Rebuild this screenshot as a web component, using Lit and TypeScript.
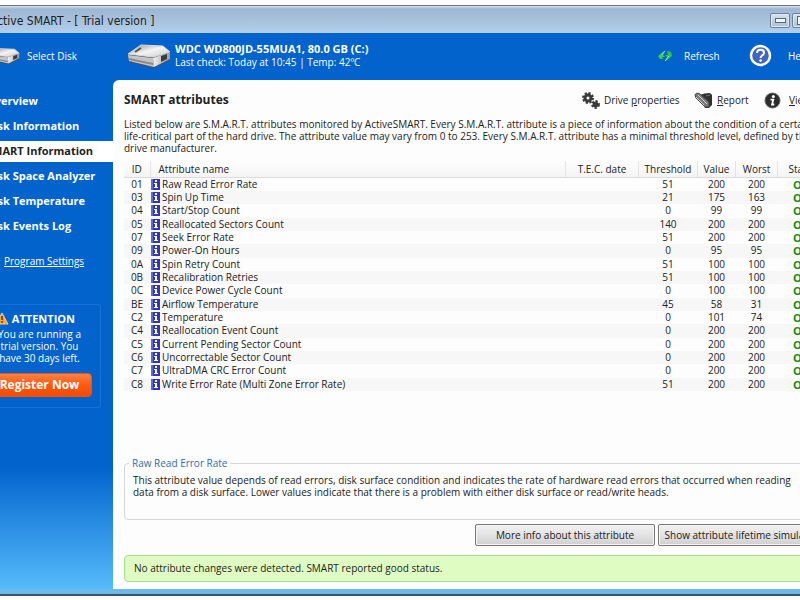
import { LitElement, html, css, svg } from "lit";
import { customElement } from "lit/decorators.js";
import { classMap } from "lit/directives/class-map.js";

type Row = [string, string, number, number, number];

const ROWS: Row[] = [
  ["01", "Raw Read Error Rate", 51, 200, 200],
  ["03", "Spin Up Time", 21, 175, 163],
  ["04", "Start/Stop Count", 0, 99, 99],
  ["05", "Reallocated Sectors Count", 140, 200, 200],
  ["07", "Seek Error Rate", 51, 200, 200],
  ["09", "Power-On Hours", 0, 95, 95],
  ["0A", "Spin Retry Count", 51, 100, 100],
  ["0B", "Recalibration Retries", 51, 100, 100],
  ["0C", "Device Power Cycle Count", 0, 100, 100],
  ["BE", "Airflow Temperature", 45, 58, 31],
  ["C2", "Temperature", 0, 101, 74],
  ["C4", "Reallocation Event Count", 0, 200, 200],
  ["C5", "Current Pending Sector Count", 0, 200, 200],
  ["C6", "Uncorrectable Sector Count", 0, 200, 200],
  ["C7", "UltraDMA CRC Error Count", 0, 200, 200],
  ["C8", "Write Error Rate (Multi Zone Error Rate)", 51, 200, 200],
];

const NAV = [
  "Overview",
  "Disk Information",
  "SMART Information",
  "Disk Space Analyzer",
  "Disk Temperature",
  "Disk Events Log",
];

const drive = (w: number, h: number) => html`
  <svg width=${w} height=${h} viewBox="0 0 44 26" aria-hidden="true">
    <defs>
      <linearGradient id="top" x1="0" y1="0" x2="1" y2="1">
        <stop offset="0" stop-color="#8d8d8d" />
        <stop offset="0.5" stop-color="#f4f4f4" />
        <stop offset="1" stop-color="#c9c9c9" />
      </linearGradient>
      <linearGradient id="side" x1="0" y1="0" x2="1" y2="0">
        <stop offset="0" stop-color="#f2f2f2" />
        <stop offset="1" stop-color="#9a9a9a" />
      </linearGradient>
    </defs>
    <path d="M1 12 L14 2 L36 4 L43 9 L43 17 L27 25 L2 19 Z" fill="#4c5058" />
    <path d="M1 11 L14 2 L36 3 L43 9 L26 14 Z" fill="url(#top)" stroke="#d9d9d9" />
    <path d="M1 12 L26 15 L27 24 L2 18 Z" fill="#c4c4c4" />
    <path d="M2 15 L26 20 L26 22 L2 17 Z" fill="#8b8b8b" />
    <path d="M26 15 L43 9 L43 16 L27 24 Z" fill="url(#side)" />
    <path d="M34 13 L40 11 L40 16 L34 19 Z" fill="#3c3c3c" />
    <path d="M8 9 L14 5" stroke="#555" stroke-width="2" />
  </svg>`;

const gear = (cx: number, cy: number, r: number) => svg`
  <circle cx=${cx} cy=${cy} r=${r} fill="none" stroke="#3a3a3a" stroke-width="2" stroke-dasharray="2.2 1.7" />
  <circle cx=${cx} cy=${cy} r=${r - 2} fill="none" stroke="#3a3a3a" stroke-width="3" />
`;

const gears = html`
  <svg width="18" height="17" viewBox="0 0 18 17" aria-hidden="true">
    ${gear(6, 6, 5)} ${gear(13.5, 12.5, 3.4)}
  </svg>`;

const report = html`
  <svg width="19" height="17" viewBox="0 0 19 17" aria-hidden="true">
    <path d="M6 3 Q10 1 16 1 L18 3 V13 L15 16 H11 Z" fill="#303030" />
    <path d="M1 3 Q2 0 6 2 L15 10 V15 L11 15 L2 6 Z" fill="#777" stroke="#454545" />
    <path d="M2 5 L10 13 M4 3 L13 12" stroke="#d6d6d6" />
    <path d="M12 4 L16 3" stroke="#777" />
  </svg>`;

const info = html`
  <svg width="17" height="17" viewBox="0 0 17 17" aria-hidden="true">
    <circle cx="8.5" cy="8.5" r="7.5" fill="#2c2c2c" stroke="#666" />
    <circle cx="9.3" cy="4.6" r="1.5" fill="#fff" />
    <path d="M6.5 7.7 H9.3 L8 12.5 H10.3" stroke="#fff" stroke-width="1.8" fill="none" />
  </svg>`;

const refresh = html`
  <svg width="16" height="12" viewBox="0 0 16 12" aria-hidden="true">
    <path d="M7 1 L1 6 L3 9 H6 L5 7 H8 L6 5 Z" fill="#35d24a" />
    <path d="M9 11 L15 6 L14 2 L10 1 L11 5 H8 L10 7 Z" fill="#2fc445" />
    <path d="M8 1 L5 5 M8 11 L12 6" stroke="#8df08f" />
  </svg>`;

const help = html`
  <svg width="23" height="23" viewBox="0 0 23 23" aria-hidden="true">
    <circle cx="11.5" cy="11.5" r="9.5" fill="#3f66c4" stroke="#fff" stroke-width="2.4" />
    <path d="M8 9 Q8 5.7 11.5 5.7 Q15 5.7 15 8.7 Q15 10.5 13 11.5 Q11.6 12.3 11.6 14" fill="none" stroke="#fff" stroke-width="2" />
    <circle cx="11.6" cy="16.6" r="1.3" fill="#fff" />
  </svg>`;

const warning = html`
  <svg width="14" height="13" viewBox="0 0 14 13" aria-hidden="true">
    <path d="M7 1 L13 12 H1 Z" fill="#f5a63c" stroke="#f7c988" stroke-linejoin="round" />
    <path d="M7 4 V8" stroke="#5b3a10" stroke-width="1.6" />
    <circle cx="7" cy="10" r="0.9" fill="#5b3a10" />
  </svg>`;

const badge = html`
  <svg class="badge" width="9" height="11" viewBox="0 0 9 11" aria-hidden="true">
    <rect width="9" height="11" fill="#2f35c0" />
    <rect width="2" height="11" fill="#5c6ae0" />
    <path d="M4 1 H6 V3 H4 Z M3 4 H6 V8 H7 V9 H3 V8 H4 V5 H3 Z" fill="#fff" />
  </svg>`;

@customElement("app-root")
export class AppRoot extends LitElement {
  static styles = css`
    :host {
      display: block;
      height: 100vh;
      overflow: hidden;
      background: #fdfdfd;
      box-sizing: border-box;
      padding: 5px 0 4px;
      font: 10px/12px "Open Sans", "DejaVu Sans Condensed", sans-serif;
      color: #222;
    }
    * {
      box-sizing: border-box;
    }
    h1, h2, p, ul {
      margin: 0;
      padding: 0;
      font-size: inherit;
    }
    button {
      font: inherit;
      color: inherit;
      background: none;
      border: 0;
      padding: 0;
      white-space: nowrap;
    }
    svg {
      display: block;
      flex: none;
    }
    .window {
      height: 100%;
      width: calc(100% + 65px);
      margin-left: -24px;
      display: flex;
      flex-direction: column;
      border-top: 1px solid #6f7780;
      border-bottom: 2px solid #35566b;
    }
    .title {
      height: 27px;
      flex: none;
      display: flex;
      align-items: center;
      padding: 2px 7px 0 14px;
      background: linear-gradient(#d3dfec, #9db6d1 3px, #b4cfea);
      font-size: 12px;
      font-family: "DejaVu Sans Condensed", sans-serif;
    }
    .title h1 {
      flex: 1;
      font-weight: normal;
    }
    .controls {
      display: flex;
      gap: 2px;
    }
    .controls button {
      width: 20px;
      height: 15px;
      display: flex;
      align-items: center;
      justify-content: center;
      border: 1px solid #6c8199;
      border-radius: 2px;
      background: linear-gradient(#d5e2ef, #a9c0d8);
      box-shadow: inset 0 0 0 1px #dde8f3;
    }
    .body {
      flex: 1;
      min-height: 0;
      display: flex;
      flex-direction: column;
      background: linear-gradient(#0263cd 78%, #55bbfa);
      border-bottom: 5px solid #6db9ea;
    }
    .head {
      height: 47px;
      flex: none;
      display: flex;
      align-items: center;
      padding-bottom: 2px;
      color: #fff;
    }
    .head button {
      display: flex;
      align-items: center;
    }
    .select {
      width: 151px;
      padding-left: 14px;
      gap: 7px;
    }
    .disk {
      flex: 1;
      display: flex;
      align-items: center;
      gap: 4px;
      line-height: 13px;
    }
    .refresh {
      width: 92px;
      gap: 11px;
    }
    .help {
      width: 92px;
      gap: 16px;
    }
    .main {
      flex: 1;
      min-height: 0;
      display: flex;
    }
    .side {
      width: 137px;
      flex: none;
      color: #fff;
      padding-top: 11px;
    }
    b, .side li, .side h2 {
      font-size: 11px;
      font-weight: bold;
    }
    .side li {
      list-style: none;
      height: 21px;
      margin-bottom: 4px;
      padding-left: 10px;
      line-height: 20px;
    }
    .side li a {
      color: inherit;
      text-decoration: none;
    }
    .side li.current {
      background: #fff;
      color: #222;
    }
    .settings {
      display: inline-block;
      margin: 14px 0 0 28px;
      color: #fff;
    }
    .trial {
      margin: 37px 12px 0 10px;
      height: 104px;
      padding: 7px 8px 0 0;
      border: 1px solid #1c72d4;
      border-radius: 3px;
      text-align: center;
    }
    .trial h2 {
      display: flex;
      justify-content: flex-end;
      align-items: center;
      gap: 3px;
      margin: 0 17px 3px 0;
    }
    .register {
      width: 105px;
      height: 24px;
      margin-top: 9px;
      border-radius: 4px;
      background: linear-gradient(#ff8040, #fb5a12 50%, #f74a00);
      border: 1px solid #e2561c;
      color: #fff;
      font-size: 12px;
      font-weight: bold;
    }
    .panel {
      flex: 1;
      min-width: 0;
      display: flex;
      flex-direction: column;
      background: #fdfdfd;
      border-top-left-radius: 6px;
      padding: 10px 12px 7px 11px;
    }
    .bar {
      display: flex;
      align-items: center;
      height: 20px;
      flex: none;
      margin-bottom: 8px;
    }
    .bar h2 {
      flex: 1;
      font-size: 12px;
    }
    .bar button {
      display: flex;
      align-items: center;
      gap: 4px;
    }
    .props {
      width: 112px;
    }
    .rep {
      width: 70px;
    }
    .view {
      width: 65px;
    }
    .bar .view {
      gap: 8px;
    }
    .intro {
      white-space: nowrap;
      margin-bottom: 7px;
    }
    table {
      width: 100%;
      table-layout: fixed;
      border-collapse: collapse;
      text-align: center;
      margin-bottom: auto;
    }
    .c-id {
      width: 26px;
    }
    .c-tec {
      width: 73px;
    }
    .c-thr {
      width: 59px;
    }
    .c-val {
      width: 38px;
    }
    .c-wor {
      width: 42px;
    }
    .c-st {
      width: 51px;
    }
    th {
      height: 16px;
      padding: 0;
      font-weight: normal;
      border-bottom: 1px solid #dcdcdc;
      border-right: 1px solid #e4e4e4;
      background: linear-gradient(#fdfdfd, #f4f4f4);
    }
    td {
      height: 13px;
      padding: 0;
      line-height: 13px;
      white-space: nowrap;
    }
    tr:nth-child(3n) td {
      height: 14px;
    }
    tr:nth-child(even) td {
      background: #f7f7f7;
    }
    th.name {
      text-align: left;
      padding-left: 8px;
    }
    td.name {
      text-align: left;
      padding-left: 1px;
    }
    .badge {
      display: inline-block;
      vertical-align: -2px;
      margin-right: 2px;
    }
    td.ok {
      color: #128a12;
      font-size: 11px;
      font-weight: bold;
      padding-right: 4px;
    }
    fieldset {
      height: 63px;
      margin: 0 0 4px;
      padding: 5px 8px;
      border: 1px solid #d6d6d6;
      border-radius: 4px;
      white-space: nowrap;
    }
    legend {
      color: #2f6fa8;
      padding: 0 3px;
      margin-left: -4px;
    }
    .actions {
      display: flex;
      gap: 3px;
      justify-content: flex-end;
      margin-bottom: 9px;
    }
    .actions button {
      width: 171px;
      height: 22px;
      border: 1px solid #777;
      border-radius: 2px;
      background: linear-gradient(#f2f2f2, #e3e3e3 50%, #cfcfcf);
      box-shadow: inset 0 0 0 1px #f6f6f6;
    }
    .actions .more {
      width: 180px;
    }
    .status {
      height: 27px;
      flex: none;
      padding: 0 9px;
      line-height: 25px;
      border: 1px solid #a9dc94;
      border-radius: 4px;
      background: #dffdc2;
    }
  `;

  render() {
    return html`
      <div class="window">
        <header class="title">
          <h1>Active SMART - [ Trial version ]</h1>
          <div class="controls">
            <button aria-label="Minimize">
              <svg width="11" height="5"><rect x="0.5" y="0.5" width="10" height="4" fill="#f4f4f4" stroke="#5a6a7c" /></svg>
            </button>
            <button aria-label="Maximize">
              <svg width="11" height="9"><rect x="0.5" y="0.5" width="10" height="8" fill="#f4f4f4" stroke="#5a6a7c" /></svg>
            </button>
            <button aria-label="Close">
              <svg width="9" height="9"><path d="M1 1 L8 8 M8 1 L1 8" stroke="#5a6a7c" stroke-width="2" /></svg>
            </button>
          </div>
        </header>
        <div class="body">
          <div class="head">
            <button class="select">${drive(30, 18)}Select Disk</button>
            <div class="disk">
              ${drive(44, 26)}
              <div>
                <b>WDC WD800JD-55MUA1, 80.0 GB (C:)</b><br />
                Last check: Today at 10:45 | Temp: 42ºC
              </div>
            </div>
            <button class="refresh">${refresh}Refresh</button>
            <button class="help">${help}Help</button>
          </div>
          <div class="main">
            <nav class="side">
              <ul>
                ${NAV.map(
                  (n, i) => html`<li class=${classMap({ current: i === 2 })}><a href="#">${n}</a></li>`
                )}
              </ul>
              <a class="settings" href="#">Program Settings</a>
              <section class="trial">
                <h2>${warning}ATTENTION</h2>
                <p>You are running a<br />trial version. You<br />have 30 days left.</p>
                <button class="register">Register Now</button>
              </section>
            </nav>
            <main class="panel">
              <div class="bar">
                <h2>SMART attributes</h2>
                <button class="props">${gears}<span>Drive <u>p</u>roperties</span></button>
                <button class="rep">${report}<span><u>R</u>eport</span></button>
                <button class="view">${info}<span><u>V</u>iew</span></button>
              </div>
              <p class="intro">
                Listed below are S.M.A.R.T. attributes monitored by ActiveSMART. Every S.M.A.R.T. attribute is a piece of information about the condition of a certain<br />
                life-critical part of the hard drive. The attribute value may vary from 0 to 253. Every S.M.A.R.T. attribute has a minimal threshold level, defined by the<br />
                drive manufacturer.
              </p>
              <table>
                <thead>
                  <tr>
                    <th class="c-id">ID</th>
                    <th class="name">Attribute name</th>
                    <th class="c-tec">T.E.C. date</th>
                    <th class="c-thr">Threshold</th>
                    <th class="c-val">Value</th>
                    <th class="c-wor">Worst</th>
                    <th class="c-st">Status</th>
                  </tr>
                </thead>
                <tbody>
                  ${ROWS.map(
                    ([id, name, thr, val, worst]) => html`<tr>
                      <td>${id}</td>
                      <td class="name">${badge}${name}</td>
                      <td></td>
                      <td>${thr}</td>
                      <td>${val}</td>
                      <td>${worst}</td>
                      <td class="ok">OK</td>
                    </tr>`
                  )}
                </tbody>
              </table>
              <fieldset>
                <legend>Raw Read Error Rate</legend>
                This attribute value depends of read errors, disk surface condition and indicates the rate of hardware read errors that occurred when reading<br />
                data from a disk surface. Lower values indicate that there is a problem with either disk surface or read/write heads.
              </fieldset>
              <div class="actions">
                <button class="more">More info about this attribute</button>
                <button>Show attribute lifetime simulation</button>
              </div>
              <p class="status" role="status">No attribute changes were detected. SMART reported good status.</p>
            </main>
          </div>
        </div>
      </div>
    `;
  }
}
